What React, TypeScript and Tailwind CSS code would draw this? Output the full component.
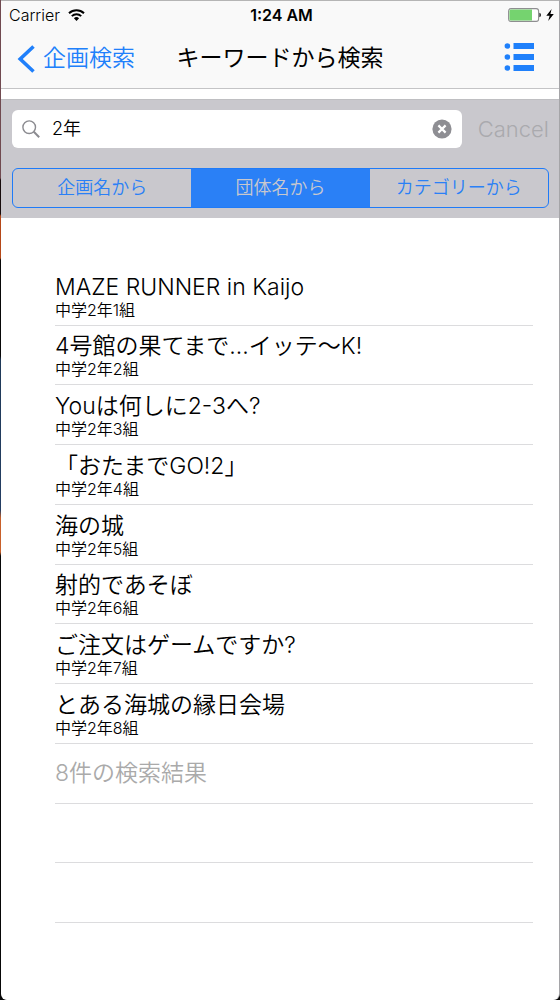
import { useState } from "react";

const results = [
  { title: "MAZE RUNNER in Kaijo", group: "中学2年1組" },
  { title: "4号館の果てまで...イッテ〜K!", group: "中学2年2組" },
  { title: "Youは何しに2-3へ?", group: "中学2年3組" },
  { title: "「おたまでGO!2」", group: "中学2年4組" },
  { title: "海の城", group: "中学2年5組" },
  { title: "射的であそぼ", group: "中学2年6組" },
  { title: "ご注文はゲームですか?", group: "中学2年7組" },
  { title: "とある海城の縁日会場", group: "中学2年8組" },
];

const scopes = ["企画名から", "団体名から", "カテゴリーから"];

function StatusBar() {
  return (
    <div className="grid h-7 grid-cols-3 items-center pr-[5px] pl-2 text-base text-black">
      <div className="flex items-center gap-2">
        <span>Carrier</span>
        <svg width="17" height="13" viewBox="0 0 17 13" fill="none" stroke="#000" strokeWidth="2" aria-label="Wi-Fi">
          <path d="M1 4.2A10.8 10.8 0 0 1 16 4.2" />
          <path d="M3.8 7.1A6.8 6.8 0 0 1 13.2 7.1" />
          <path d="M5.9 9.2A3.8 3.8 0 0 1 11.1 9.2L8.5 12Z" fill="#000" stroke="none" />
        </svg>
      </div>
      <div className="text-center font-semibold">1:24 AM</div>
      <div className="flex items-center justify-end gap-[5px]">
        <svg width="33" height="14" viewBox="0 0 33 14" aria-label="Battery">
          <rect x="0.6" y="0.6" width="30" height="12.8" rx="2.4" fill="#fff" stroke="#8e8e90" strokeWidth="1.1" />
          <path d="M3 1.4H24V12.6H3Q1.4 12.6 1.4 11V3Q1.4 1.4 3 1.4Z" fill="#75d36f" />
          <path d="M31.4 4.8Q33 5.2 33 7T31.4 9.2Z" fill="#222" />
        </svg>
        <svg width="8" height="12" viewBox="0 0 8 12" fill="#000" aria-label="Charging">
          <path d="M5.6 0L0.3 6.7H3.6L2.2 12L7.8 4.9H4.4Z" />
        </svg>
      </div>
    </div>
  );
}

export default function App() {
  const [query, setQuery] = useState("2年");
  const [scope, setScope] = useState(1);

  return (
    <div className="min-h-screen bg-[linear-gradient(to_bottom,#704a50_0px,#704a50_178px,#160b0b_180px,#160b0b_214px,#b54818_216px,#b54818_258px,#080808_260px,#080808_356px,#1f3958_360px,#243e63_510px,#c8602a_518px,#c8602a_552px,#080808_556px)] pr-px pl-px font-['Inter','Noto_Sans_CJK_JP',sans-serif] font-[350]">
      <div className="min-h-screen overflow-hidden rounded-b-md border-t border-[#b5b5b5] bg-white shadow-[1px_0_0_#a5a5a8]">
        <header className="border-b border-[#c4c4c6] bg-[#f9f9f9]">
          <StatusBar />
          <nav className="grid h-[59px] grid-cols-[1fr_auto_1fr] items-center px-4">
            <a href="#back" className="flex items-center gap-2 text-[23px] text-[#2080fb]">
              <svg width="18" height="28" viewBox="0 0 18 28" fill="none" stroke="currentColor" strokeWidth="3.6" aria-hidden="true">
                <path d="M16.5 1.5L3.2 14L16.5 26.5" />
              </svg>
              企画検索
            </a>
            <h1 className="text-[23px] font-normal text-black">キーワードから検索</h1>
            <button type="button" aria-label="メニュー" className="justify-self-end pr-2 pb-1 text-[#1f80fb]">
              <svg width="31" height="28" viewBox="0 0 31 28" fill="currentColor" aria-hidden="true">
                <circle cx="3.4" cy="3" r="2.8" />
                <circle cx="3.4" cy="14" r="2.8" />
                <circle cx="3.4" cy="25" r="2.8" />
                <rect x="9.5" y="0" width="20.5" height="6" />
                <rect x="9.5" y="11" width="20.5" height="6" />
                <rect x="9.5" y="22" width="20.5" height="6" />
              </svg>
            </button>
          </nav>
        </header>

        <search className="mt-[10px] block border-t border-[#bfbfc2] bg-[#c9c8cd] py-[10px] pr-[10px] pl-[11px]">
          <div className="flex items-center gap-4">
            <div className="flex h-[38px] min-w-0 flex-1 items-center gap-3 rounded-md bg-white px-[10px]">
              <svg width="18" height="18" viewBox="0 0 18 18" fill="none" stroke="#8b8b90" strokeWidth="1.4" aria-hidden="true">
                <circle cx="7.2" cy="7.2" r="6.3" />
                <path d="M11.8 11.8L17.2 17.2" strokeWidth="2" />
              </svg>
              <input
                aria-label="キーワード"
                value={query}
                onChange={(e) => setQuery(e.target.value)}
                className="min-w-0 flex-1 bg-transparent text-lg text-black outline-none"
              />
              <button type="button" aria-label="消去" onClick={() => setQuery("")}>
                <svg width="20" height="20" viewBox="0 0 20 20" aria-hidden="true">
                  <circle cx="10" cy="10" r="9.6" fill="#8e8e93" />
                  <path d="M6.4 6.4L13.6 13.6M13.6 6.4L6.4 13.6" stroke="#fff" strokeWidth="2.2" />
                </svg>
              </button>
            </div>
            <button type="button" disabled className="text-[22px] text-[#aaaaae]">
              Cancel
            </button>
          </div>
          <div className="mt-5 grid h-10 grid-cols-3 overflow-hidden rounded-md border border-[#1f7bf8]">
            {scopes.map((label, i) => (
              <button
                key={label}
                type="button"
                aria-pressed={scope === i}
                onClick={() => setScope(i)}
                className={
                  scope === i
                    ? "bg-[#2a80f6] text-lg text-[#c9c8cd]"
                    : "text-lg text-[#2a80f6]"
                }
              >
                {label}
              </button>
            ))}
          </div>
        </search>

        <ul className="mt-12 mr-[26px] ml-[54px] grid min-h-[657px] auto-rows-fr text-black">
          {results.map((item) => (
            <li key={item.group} className="flex flex-col justify-end border-b border-[#dcdcde] pb-[5px]">
              <span className="text-[23px] leading-7">{item.title}</span>
              <span className="text-base leading-[19px]">{item.group}</span>
            </li>
          ))}
          <li className="flex items-center border-b border-[#dcdcde] text-[23px] text-[#aaaaaa]">
            8件の検索結果
          </li>
          <li className="border-b border-[#dcdcde]" />
          <li className="border-b border-[#dcdcde]" />
        </ul>
      </div>
    </div>
  );
}
